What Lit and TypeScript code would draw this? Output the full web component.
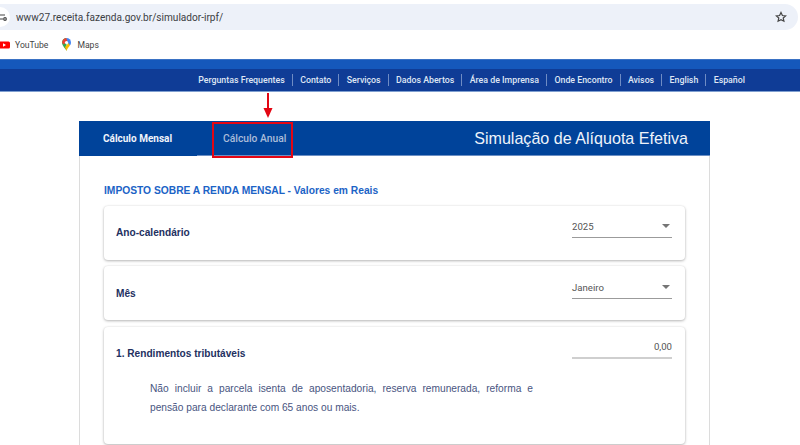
import { LitElement, html, css } from "lit";
import { customElement } from "lit/decorators.js";

const NAV = ["Perguntas Frequentes","Contato","Serviços","Dados Abertos","Área de Imprensa","Onde Encontro","Avisos","English","Español"];

@customElement("app-root")
export class AppRoot extends LitElement {
  static styles = css`
    :host { display: block; width: 800px; height: 445px; overflow: hidden; background: #fff; position: relative; font-family: "Roboto", "Liberation Sans", sans-serif; }
    .omni { height: 26px; margin: 4px 2px 0 0; padding-right: 11px; background: #edf1f9; border-radius: 0 13px 13px 0; display: flex; align-items: center; }
    .site { width: 10px; height: 20px; background: #fff; border-radius: 0 10px 10px 0; flex: none; display: flex; align-items: center; overflow: hidden; }
    .url { margin-left: 6px; flex: 1; font-size: 10.1px; color: #3c4043; font-family: "Roboto", sans-serif; }
    .bookmarks { height: 29px; display: flex; align-items: center; font-size: 8.6px; color: #444; }
    .bm { display: flex; align-items: center; }
    .yt { margin-right: 5px; }
    .maps { margin: 0 6px 0 14px; }
    .band { height: 9px; background: #1558bb; border-top: 1px solid #3a72c4; }
    .nav { height: 22px; background: #0f3c96; border-bottom: 1px solid #7f9fd0; display: flex; align-items: center; justify-content: flex-end; padding-right: 55px; font-size: 8.8px; font-weight: 500; color: #dfe6f4; font-family: "Roboto", sans-serif; }
    .nav span { padding: 0 7.2px; border-left: 1px solid #6f8cc4; line-height: 12px; }
    .nav span:first-child { border-left: none; }
    .nav span:last-child { padding-right: 0; }
    .panel { margin: 29px 0 0 79px; width: 631px; height: 325px; box-sizing: border-box; border: 1px solid #dcdcdc; border-top: none; }
    .head { height: 35px; margin: 0 -1px; background: #00439a; display: flex; align-items: stretch; position: relative; color: #fff; }
    .tab { font-size: 10px; display: flex; align-items: center; box-sizing: border-box; }
    .tab.on { width: 118px; padding: 0 0 1px 24px; font-weight: 700; background: #00439a; color: #f0f4fa; }
    .tab.off { width: 80px; padding-left: 11px; margin-left: 15px; font-weight: 500; font-size: 10.3px; color: #a9bcd9; }
    .title { margin-left: auto; padding-right: 22px; display: flex; align-items: center; font-size: 16.1px; font-family: "Liberation Sans", sans-serif; color: #eef3fa; }
    .tabline { position: absolute; left: 118px; right: 0; bottom: 0; height: 1px; background: #6c8fc4; }
    .redbox { position: absolute; left: 133px; top: 1px; width: 81px; height: 36px; box-sizing: border-box; border: 2px solid #e30613; }
    .arrow { position: absolute; left: 262px; top: 93px; }
    h2 { margin: 0; padding: 28px 0 0 24px; height: 21px; box-sizing: content-box; font-size: 10.25px; line-height: 13px; font-weight: 700; color: #1b63c6; font-family: "Liberation Sans", sans-serif; }
    .cards { padding: 0 24px; display: flex; flex-direction: column; gap: 6px; margin-top: 1px; }
    .card { background: #fff; border-radius: 4px; padding: 0 13px 0 12px; box-shadow: 0 1px 3px rgba(0,0,0,.28), 0 0 2px rgba(0,0,0,.08); width: 581px; box-sizing: border-box; }
    .row { display: flex; justify-content: space-between; height: 54px; align-items: flex-start; }
    .second .row { padding-top: 1px; box-sizing: border-box; }
    .label { font-size: 10.15px; font-weight: 700; color: #23305f; font-family: "Liberation Sans", sans-serif; margin-top: 20px; line-height: 13px; }
    .select { width: 100px; height: 23px; box-sizing: border-box; margin-top: 9px; border-bottom: 1px solid #9b9b9b; display: flex; justify-content: space-between; align-items: center; font-size: 9.6px; color: #555; }
    .caret { width: 0; height: 0; border: 4px solid transparent; border-top: 4px solid #757575; border-bottom: none; margin-right: 2px; }
    .tall { height: 117px; margin-top: 1px; }
    .tall .row { height: auto; }
    .input { width: 100px; height: 23px; box-sizing: border-box; margin-top: 9px; border-bottom: 2px solid #cfcfcf; text-align: right; font-size: 9.6px; color: #555; line-height: 22px; }
    .note { margin: 19px 0 0 34px; width: 383px; font-size: 10.2px; line-height: 19px; color: #49557f; text-align: justify; font-family: "Liberation Sans", sans-serif; }
  `;

  render() {
    return html`
      <div class="omni">
        <div class="site">
          <svg width="10" height="20" viewBox="0 0 10 20" fill="none" stroke="#444" stroke-width="1.2"><path d="M0 8h5M0 12h3"/><circle cx="5" cy="12" r="1.3"/></svg>
        </div>
        <div class="url">www27.receita.fazenda.gov.br/simulador-irpf/</div>
        <svg width="12" height="12" viewBox="0 0 24 24" fill="none" stroke="#444" stroke-width="2.4"><path d="M12 3l2.8 6 6.4.7-4.8 4.3 1.4 6.4L12 17.2 6.2 20.400l1.400-6.400L2.800 9.700 9.200 9z"/></svg>
      </div>
      <div class="bookmarks">
        <div class="bm">
          <svg class="yt" width="10" height="10" viewBox="0 0 10 10"><path d="M0 1.500h8.500a1.500 1.500 0 0 1 1.500 1.500v4a1.500 1.500 0 0 1-1.500 1.500H0z" fill="#f00"/><path d="M3 3.200L6 5 3 6.800z" fill="#fff"/></svg>
          YouTube
        </div>
        <div class="bm">
          <svg class="maps" width="9" height="13" viewBox="0 0 9 13"><path d="M4.500 13C3.800 10.500 0 8 0 4.500a4.500 4.500 0 0 1 4.500-4.500z" fill="#34a853"/><path d="M1 1.700A4.500 4.500 0 0 1 4.500 0L6 3 1.500 6.500 0 4.500z" fill="#ea4335"/><path d="M4.500 0A4.500 4.500 0 0 1 9 4.500c0 1.200-.5 2.200-1.100 3.100L5.800 6z" fill="#4285f4"/><path d="M7.900 7.600C6.800 9.400 5 10.800 4.500 13L3 9l3.500-4z" fill="#fbbc04"/><circle cx="4.500" cy="4.500" r="1.600" fill="#fff"/></svg>
          Maps
        </div>
      </div>
      <div class="band"></div>
      <div class="nav">${NAV.map((n) => html`<span>${n}</span>`)}</div>
      <div class="panel">
        <div class="head">
          <div class="tab on">Cálculo Mensal</div>
          <div class="tab off">Cálculo Anual</div>
          <div class="title">Simulação de Alíquota Efetiva</div>
          <div class="tabline"></div>
          <div class="redbox"></div>
        </div>
        <h2>IMPOSTO SOBRE A RENDA MENSAL - Valores em Reais</h2>
        <div class="cards">
          <div class="card"><div class="row"><div class="label">Ano-calendário</div><div class="select">2025<i class="caret"></i></div></div></div>
          <div class="card second"><div class="row"><div class="label">Mês</div><div class="select">Janeiro<i class="caret"></i></div></div></div>
          <div class="card tall">
            <div class="row"><div class="label">1. Rendimentos tributáveis</div><div class="input">0,00</div></div>
            <div class="note">Não incluir a parcela isenta de aposentadoria, reserva remunerada, reforma e pensão para declarante com 65 anos ou mais.</div>
          </div>
        </div>
      </div>
      <svg class="arrow" width="12" height="26" viewBox="0 0 12 26"><path d="M6 0v17" stroke="#e30613" stroke-width="2"/><path d="M1.500 15h9L6 25z" fill="#e30613"/></svg>
    `;
  }
}
